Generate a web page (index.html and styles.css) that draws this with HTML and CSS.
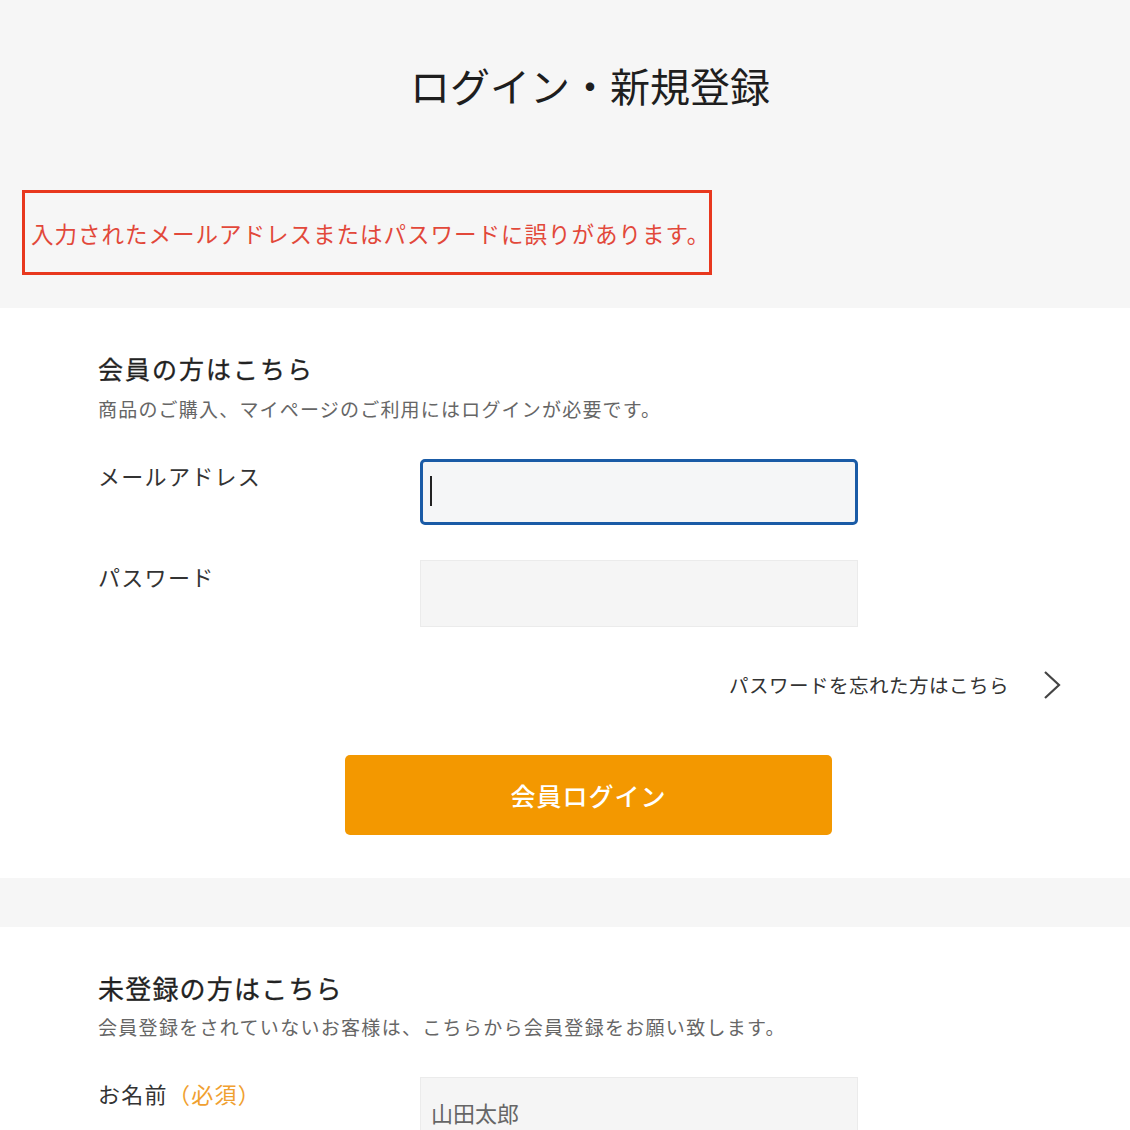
FILE: index.html
```html
<!DOCTYPE html>
<html lang="ja">
<head>
<meta charset="utf-8">
<title>ログイン・新規登録</title>
<link rel="stylesheet" href="styles.css">
</head>
<body>
<header class="top">
  <h1 class="page-title">ログイン・新規登録</h1>
  <div class="error-box">入力されたメールアドレスまたはパスワードに誤りがあります。</div>
</header>

<section class="panel panel-login">
  <h2 class="panel-title">会員の方はこちら</h2>
  <p class="panel-lead">商品のご購入、マイページのご利用にはログインが必要です。</p>
  <div class="form-row first">
    <label class="form-label">メールアドレス</label>
    <div class="field field-focus"><span class="caret"></span></div>
  </div>
  <div class="form-row">
    <label class="form-label">パスワード</label>
    <div class="field"></div>
  </div>
  <div class="forgot">
    <span class="forgot-text">パスワードを忘れた方はこちら</span>
    <svg class="chevron" width="20" height="32" viewBox="0 0 20 32"><polyline points="3,3 17,16 3,29" fill="none" stroke="#444" stroke-width="2.2"/></svg>
  </div>
  <button class="login-btn">会員ログイン</button>
</section>

<div class="band"></div>

<section class="panel panel-register">
  <h2 class="panel-title wide">未登録の方はこちら</h2>
  <p class="panel-lead tight">会員登録をされていないお客様は、こちらから会員登録をお願い致します。</p>
  <div class="form-row first">
    <label class="form-label">お名前<span class="req">（必須）</span></label>
    <div class="field field-text">山田太郎</div>
  </div>
</section>
</body>
</html>
```

FILE: styles.css
```css
html, body {
  margin: 0;
  padding: 0;
  background: #ffffff;
  font-family: "Noto Sans CJK JP", "Noto Sans", sans-serif;
  color: #222;
}

.top {
  background: #f6f6f6;
  padding: 55px 0 33px;
}

.page-title {
  margin: 0;
  text-align: center;
  font-size: 40px;
  line-height: 60px;
  font-weight: 400;
  color: #1e1e1e;
  padding-left: 50px;
  height: 60px;
}

.error-box {
  margin: 75px 0 0 22px;
  width: 678px;
  height: 79px;
  border: 3px solid #e8381e;
  box-sizing: content-box;
  display: flex;
  align-items: center;
  padding-left: 6px;
  color: #e2483a;
  font-size: 22.5px;
  letter-spacing: 1px;
  white-space: nowrap;
}

.panel {
  padding: 42px 68px 43px 98px;
}

.panel-register {
  padding-bottom: 0;
}

.panel-title {
  margin: 0;
  font-size: 25px;
  line-height: 36px;
  font-weight: 400;
  letter-spacing: 2px;
  color: #222;
  -webkit-text-stroke: 0.3px #222;
}

.panel-title.wide {
  font-size: 26px;
  line-height: 38px;
  letter-spacing: 1.2px;
}

.panel-lead {
  margin: 9px 0 0;
  font-size: 19px;
  line-height: 28px;
  color: #666;
  letter-spacing: 1.2px;
}

.panel-lead.tight {
  margin-top: 6px;
  letter-spacing: 1.3px;
}

.form-row {
  display: grid;
  grid-template-columns: 322px 438px;
  margin-top: 35px;
}

.form-row.first {
  margin-top: 36px;
}

.form-label {
  font-size: 22px;
  line-height: 32px;
  color: #333;
  letter-spacing: 1.3px;
}

.req {
  color: #f0a030;
}

.field {
  height: 67px;
  box-sizing: border-box;
  background: #f5f5f5;
  border: 1px solid #ebebeb;
}

.field-focus {
  height: 66px;
  border: 3px solid #1a5ba6;
  border-radius: 5px;
  background: #f5f6f7;
  display: flex;
  align-items: center;
  padding-left: 7px;
}

.caret {
  display: block;
  width: 2px;
  height: 30px;
  background: #222;
  margin-top: -2px;
}

.field-text {
  display: flex;
  align-items: center;
  padding-left: 10px;
  font-size: 22px;
  color: #666;
  padding-top: 2px;
}

.forgot {
  display: flex;
  justify-content: flex-end;
  align-items: center;
  margin-top: 44px;
  height: 28px;
}

.forgot-text {
  font-size: 19.5px;
  line-height: 28px;
  color: #333;
  letter-spacing: 0.5px;
}

.chevron {
  margin-left: 33px;
  display: block;
}

.login-btn {
  display: flex;
  align-items: center;
  justify-content: center;
  margin: 56px 0 0 247px;
  width: 487px;
  height: 80px;
  border: none;
  border-radius: 5px;
  background: #f39800;
  color: #fff;
  font-family: inherit;
  font-size: 25px;
  font-weight: 500;
  letter-spacing: 1px;
  padding: 0;
}

.band {
  height: 49px;
  background: #f6f6f6;
}
```
